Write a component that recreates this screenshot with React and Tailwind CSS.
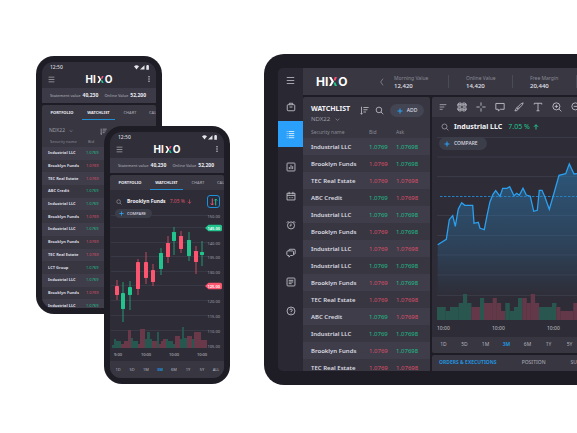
import React from "react";

const securities = [
  ["Industrial LLC", 1, 1],
  ["Brooklyn Funds", 0, 1],
  ["TEC Real Estate", 0, 0],
  ["ABC Credit", 1, 0],
  ["Industrial LLC", 1, 1],
  ["Brooklyn Funds", 0, 1],
  ["Industrial LLC", 0, 0],
  ["Industrial LLC", 1, 1],
  ["Brooklyn Funds", 0, 1],
  ["TEC Real Estate", 0, 0],
  ["ABC Credit", 1, 0],
  ["Industrial LLC", 1, 1],
  ["Brooklyn Funds", 0, 1],
  ["TEC Real Estate", 0, 0],
];

const phoneSecurities = [
  ["Industrial LLC", 1],
  ["Brooklyn Funds", 0],
  ["TEC Real Estate", 0],
  ["ABC Credit", 1],
  ["Industrial LLC", 1],
  ["Brooklyn Funds", 0],
  ["Industrial LLC", 1],
  ["Brooklyn Funds", 0],
  ["TEC Real Estate", 0],
  ["LCT Group", 1],
  ["Industrial LLC", 1],
  ["Brooklyn Funds", 0],
  ["Industrial LLC", 1],
];

// x, wick top, wick bottom, body top, body bottom, rising
const candles = [
  [7, 73, 93, 79, 88, 0],
  [13, 75, 115, 86, 102, 1],
  [20, 74, 103, 80, 88, 1],
  [28, 52, 88, 55, 82, 0],
  [36, 45, 77, 55, 71, 0],
  [43, 57, 79, 63, 75, 0],
  [51, 41, 68, 46, 62, 1],
  [58, 29, 56, 36, 50, 0],
  [64, 20, 48, 25, 34, 1],
  [71, 24, 46, 29, 42, 0],
  [79, 25, 54, 33, 49, 1],
  [86, 39, 67, 44, 55, 0],
  [92, 34, 59, 45, 48, 1],
];

// start, end, height, rising
const phoneVolume = [
  [2, 4, 3, 1], [4, 6, 9, 1], [6, 11, 7, 1], [11, 14, 4, 0], [14, 18, 7, 0],
  [18, 21, 18, 0], [21, 23, 10, 1], [23, 28, 7, 1], [28, 30, 4, 0], [30, 35, 19, 0],
  [35, 37, 9, 1], [37, 40, 16, 1], [40, 42, 9, 1], [42, 47, 7, 0], [47, 49, 16, 1],
  [49, 51, 4, 0], [51, 53, 7, 0], [53, 56, 9, 0], [56, 58, 9, 1], [58, 63, 7, 1],
  [63, 65, 4, 1], [65, 70, 12, 0], [70, 72, 9, 1], [72, 74, 21, 1], [74, 77, 10, 1],
  [77, 82, 12, 0], [82, 84, 9, 1], [84, 91, 16, 0], [91, 97, 8, 0],
];

const tabletVolume = [
  [5, 13.7, 13, 1], [13.7, 18, 9, 1], [18, 26.7, 13, 1], [26.7, 31, 17, 1],
  [31, 35, 26, 1], [35, 39.3, 17, 1], [39.3, 48, 13, 0], [48, 52, 22, 1],
  [52, 60.7, 17, 0], [60.7, 64.7, 22, 0], [64.7, 69, 17, 0], [69, 73.3, 9, 0],
  [73.3, 77.7, 17, 1], [77.7, 82, 9, 1], [82, 86, 13, 1], [86, 90.3, 22, 1],
  [90.3, 94.7, 22, 0], [94.7, 98.7, 17, 0], [98.7, 103, 26, 0], [103, 107, 17, 0],
  [107, 120, 13, 1], [120, 124.3, 17, 1], [124.3, 128.3, 13, 0], [128.3, 141.3, 9, 0],
  [141.3, 150, 17, 0], [150, 160, 13, 1], [160, 170, 9, 1], [170, 180, 17, 0],
];

const pricePath =
  "5.7,107.7 14.3,102.3 17.3,82.7 20.7,78.7 23.3,89.3 26.3,72 29.7,65.7 32.7,68.3 40.7,68.3 42,86.3 46.3,85.3 48,91.3 52.3,92.7 55,78.7 58,64.7 61,57.3 63.7,53.7 68,59.3 70.7,51.3 75,51.3 77.7,49.7 82,58.7 84.7,56.3 87.3,58.3 91,51.3 94.3,58 98.3,59.3 101.7,74.3 105.3,73.3 107.3,53.3 110,53.3 113,60.3 117.3,72.3 121.7,57.3 127,38.3 133.7,36.7 137.3,27 142,37 150,36 158,44 166,30 180,34";

const ICONS = {
  menu: <path d="M2 4h20M2 12h20M2 20h20" />,
  briefcase: <path d="M3 8.500a2 2 0 0 1 2-2h14a2 2 0 0 1 2 2V19a2 2 0 0 1-2 2H5a2 2 0 0 1-2-2zM8 6.500V3h8v3.500M8.500 12h7" />,
  list: <path d="M2 4h2M2 9.500h2M2 15h2M2 20.500h2M7 4h15M7 9.500h15M7 15h15M7 20.500h15" />,
  chart: <path d="M4 2.500h16a1.500 1.500 0 0 1 1.500 1.500v16a1.500 1.500 0 0 1-1.500 1.500H4A1.500 1.500 0 0 1 2.500 20V4A1.500 1.500 0 0 1 4 2.500zM8 17v-5M12 17V7M16 17v-7" />,
  calendar: <path d="M2.500 5.500h19V21.500h-19zM2.500 10.500h19M7.500 2v6M16.500 2v6M7 16h2M11 16h2M15 16h2" />,
  alarm: <path d="M12 4.500a8.500 8.500 0 1 1 0 17 8.500 8.500 0 0 1 0-17zM12 8.500V14H8.500M2 6.500l4-4M22 6.500l-4-4" />,
  chat: <path d="M7 7V5.500A2.500 2.500 0 0 1 9.500 3h10A2.500 2.500 0 0 1 22 5.500v7a2.500 2.500 0 0 1-2.500 2.500H18M4.500 7h11A2.500 2.500 0 0 1 18 9.500v6a2.500 2.500 0 0 1-2.500 2.500H11l-4 4v-4H4.500A2.500 2.500 0 0 1 2 15.500v-6A2.500 2.500 0 0 1 4.500 7z" />,
  news: <path d="M4.500 2.500h15a2 2 0 0 1 2 2v15a2 2 0 0 1-2 2h-15a2 2 0 0 1-2-2v-15a2 2 0 0 1 2-2zM6.500 8h11M6.500 12h11M6.500 16h7" />,
  help: <path d="M12 2.500a9.500 9.500 0 1 1 0 19 9.500 9.500 0 0 1 0-19zM9 10a3 3 0 1 1 3 3v1.500M12 16.500v1.500" />,
  sort: <path d="M4 2v20M1.500 19.500L4 22l2.500-2.500M9 4h14M9 10h11M9 16h7" />,
  search: <path d="M10.500 3a7.500 7.500 0 1 1 0 15 7.500 7.500 0 0 1 0-15zM16 16l6 6" />,
  plus: <path d="M12 2v20M2 12h20" />,
  left: <path d="M15 2l-7 10 7 10" />,
  down: <path d="M3 8l9 8 9-8" />,
  arrowUp: <path d="M12 22V3M4 11l8-8 8 8" />,
  arrowDown: <path d="M12 2v19M4 13l8 8 8-8" />,
  lines: <path d="M2 5h20M2 12h14M2 19h9" />,
  grid: <path d="M4.500 2.500H10V10H2V5zM14 2.500h5.500L22 5v5h-8zM2 14h8v7.500H4.500L2 19zM14 14h8v5l-2.500 2.500H14zM2 6.500h8M14 6.500h8M2 17.500h8M14 17.500h8" />,
  cross: <path d="M12 1v8M12 15v8M1 12h8M15 12h8" />,
  comment: <path d="M2 3.500h20v14h-9l-5 4v-4H2z" />,
  brush: <path d="M22 2c-4 1-9 5-12 9l3 3c4-3 8-8 9-12zM10 11l-3 3 3 3 3-3M7 14c-3 1-2 5-5 7 4 1 7-1 8-4" />,
  type: <path d="M3 6V3h18v3M12 3v18M8.500 21h7" />,
  zoomIn: <path d="M10.500 2a8.500 8.500 0 1 1 0 17 8.500 8.500 0 0 1 0-17zM17 17l5.500 5.500M10.500 6.500v8M6.500 10.500h8" />,
  zoomOut: <path d="M10.500 2a8.500 8.500 0 1 1 0 17 8.500 8.500 0 0 1 0-17zM17 17l5.500 5.500M6.500 10.500h8" />,
};

function Icon({ name, className = "size-[10px]", weight = 2 }) {
  return (
    <svg viewBox="0 0 24 24" fill="none" stroke="currentColor" strokeWidth={weight} className={"shrink-0 " + className} aria-hidden="true">
      {ICONS[name]}
    </svg>
  );
}

function Logo({ className, markClass }) {
  return (
    <div className={"flex items-center gap-px font-['Inter',sans-serif] font-bold leading-none text-white " + className}>
      <span>HI</span>
      <svg viewBox="0 0 16 18" className={markClass} aria-hidden="true">
        <path d="M0 0h4.500L10 9l-5.500 9H0l5-9z" fill="#fff" />
        <path d="M11.500 0H16l-3 7h-4z" fill="#ff4d6d" />
        <path d="M9 11h4l3 7h-4.500z" fill="#1fc98e" />
      </svg>
      <span>O</span>
    </div>
  );
}

const tone = (up) => (up ? "text-[#22bd8a]" : "text-[#dc5069]");

function Phone({ className = "", bodyClass, children }) {
  return (
    <section className={"h-[258px] w-[126px] rounded-[18px] bg-[#1e1d26] p-[6px] " + className}>
      <div className="flex h-full flex-col overflow-hidden rounded-[11px] bg-[#1e1d26]">
        <header className="bg-[#2f2e39] pb-[3px]">
          <div className="flex h-[11px] items-center justify-between pl-2 pr-[6px] text-[5px] font-medium text-[#d8d8de]">
            <span>12:50</span>
            <svg viewBox="0 0 16 5" className="h-[5px] w-[16px]" fill="#e4e4ea" aria-hidden="true">
              <path d="M0 1.200Q2.500-.8 5 1.200L2.500 4.600z" />
              <path d="M6 4.600L10.500.2v4.400z" />
              <path d="M12.300.6h.6V0h1.400v.6h.6v4.200h-2.600z" />
            </svg>
          </div>
          <div className="flex h-3 items-center justify-between px-1 text-[#c9c9d1]">
            <button aria-label="Menu" className="flex w-[9px] justify-end"><Icon name="menu" className="size-[7px]" /></button>
            <Logo className="text-[10px]" markClass="h-[7px] w-[7px]" />
            <button aria-label="More" className="flex w-[9px] justify-end">
              <svg viewBox="0 0 6 6" className="size-[6px]" fill="#dcdce2" aria-hidden="true">
                <circle cx="3" cy=".7" r=".7" /><circle cx="3" cy="3" r=".7" /><circle cx="3" cy="5.300" r=".7" />
              </svg>
            </button>
          </div>
        </header>
        <div className="flex h-[15px] items-center justify-between bg-[#3b3a46] pl-2 pr-[10px] text-[4px] text-[#b4b4bd]">
          <span className="flex items-center gap-[2px] whitespace-nowrap">Statement value <b className="text-[5px] font-bold text-[#ececf1]">40,230</b></span>
          <span className="flex items-center gap-[2px] whitespace-nowrap">Online Value <b className="text-[5px] font-bold text-[#ececf1]">52,200</b></span>
        </div>
        <nav className="mt-[2px] flex h-[15px] shrink-0 overflow-hidden rounded-t-[2px] bg-[#383742] text-[4px] font-bold">
          <button className="w-10 shrink-0 text-[#ececf1]">PORTFOLIO</button>
          <button className="w-[33px] shrink-0 border-b border-[#1f8fd6] pt-px text-[#ececf1]">WATCHLIST</button>
          <button className="w-[30px] shrink-0 font-medium text-[#a2a2ac]">CHART</button>
          <button className="shrink-0 pl-[4px] font-medium text-[#a2a2ac]">CALENDAR</button>
        </nav>
        <div className={"flex min-h-0 flex-1 flex-col " + bodyClass}>{children}</div>
      </div>
    </section>
  );
}

function WatchlistPhone() {
  return (
    <Phone className="ml-9 mt-14" bodyClass="bg-[#373641]">
      <div className="flex h-[17px] shrink-0 items-center pl-[7px] pr-[6px] pt-[5px] text-[5px] text-[#9c9ca6]">
        <span>NDX22</span>
        <Icon name="down" className="ml-[4px] size-1" weight={3} />
        <Icon name="sort" className="ml-[27px] size-[7px] text-[#c9c9d1]" />
      </div>
      <table className="h-[175px] w-full shrink-0 table-fixed text-left text-[4px] leading-none">
        <thead className="text-[#8a8a95]">
          <tr className="h-[10px]">
            <th className="w-[44px] pl-2 font-normal">Security name</th>
            <th className="pl-[2px] font-normal">Bid</th>
          </tr>
        </thead>
        <tbody>
          {phoneSecurities.map(([name, up], i) => (
            <tr key={i} className="odd:bg-[#3e3d49]">
              <td className="whitespace-nowrap pl-[6px] font-bold text-[#dcdce2]">{name}</td>
              <td className={tone(up)}>1.0769</td>
            </tr>
          ))}
        </tbody>
      </table>
    </Phone>
  );
}

function PriceTag({ y, fill, children }) {
  return (
    <g>
      <path d={`M95 ${y}l3.500-3.200h12a1.500 1.500 0 0 1 1.500 1.500v3.400a1.500 1.500 0 0 1-1.500 1.500h-12z`} fill={fill} />
      <text x="110" y={y + 1.5} textAnchor="end" fontSize="4" fontWeight="600" fill="#fff">{children}</text>
    </g>
  );
}

function ChartPhone() {
  const labels = [["150.00", 9], ["140.00", 36], ["135.00", 50], ["130.00", 65], ["120.00", 94], ["115.00", 109], ["110.00", 124], ["105.00", 139]];
  return (
    <Phone className="absolute left-[104px] top-[126px]" bodyClass="bg-[#2e2d37]">
      <div className="mt-[5px] flex h-[13px] items-center pl-[6px] pr-1 text-[5px]">
        <Icon name="search" className="size-[6px] text-[#b4b4bd]" />
        <span className="ml-[5px] whitespace-nowrap font-bold text-[#f2f2f6]">Brooklyn Funds</span>
        <span className="ml-1 whitespace-nowrap text-[#dc5069]">7.05 %</span>
        <Icon name="arrowDown" className="ml-[2px] size-[5px] text-[#e0506c]" weight={3} />
        <button aria-label="Buy or sell" className="ml-auto flex size-[13px] items-center justify-center rounded-[3px] border border-[#1f8fd6] bg-[#262c3c]">
          <svg viewBox="0 0 8 8" className="size-2" fill="none" strokeWidth="1" aria-hidden="true">
            <path d="M2.300.5v6.500M.8 5.500L2.300 7l1.500-1.500" stroke="#f5506e" />
            <path d="M5.700 7.500V1M4.200 2.500L5.700 1l1.500 1.500" stroke="#20c48c" />
          </svg>
        </button>
      </div>
      <div className="relative">
        <svg viewBox="0 1 114 153" className="block h-[153px] w-full" aria-hidden="true">
          {[9, 21, 36, 50, 65, 79, 94, 109, 124].map((y) => (
            <path key={y} d={`M1 ${y - 0.5}h97`} stroke="#393845" strokeWidth="1" />
          ))}
          {phoneVolume.map(([a, b, h, up], i) => (
            <rect key={i} x={a} y={141 - h} width={b - a} height={h} fill={up ? "#27584f" : "#69394a"} />
          ))}
          {candles.map(([x, wt, wb, bt, bb, up], i) => (
            <g key={i} fill={up ? "#20c48c" : "#fb5570"}>
              <rect x={x - 0.5} y={wt} width="1" height={wb - wt} opacity=".7" />
              <rect x={x - 2} y={bt} width="4" height={bb - bt} rx=".4" />
            </g>
          ))}
          <g fontSize="4" fill="#a2a2ac">
            {labels.map(([t, y]) => (
              <text key={t} x="110" y={y + 1.5} textAnchor="end">{t}</text>
            ))}
            {[["9:00", 8], ["10:00", 36], ["10:00", 64], ["10:00", 92]].map(([t, x]) => (
              <text key={x} x={x} y="149" textAnchor="middle" fill="#c4c4cc">{t}</text>
            ))}
          </g>
          <PriceTag y={21} fill="#20c48c">145.00</PriceTag>
          <PriceTag y={79} fill="#fb5570">125.00</PriceTag>
        </svg>
        <button className="absolute left-[5px] top-px flex h-[9px] items-center gap-[3px] rounded-full bg-[#3b3d49] pl-[4px] pr-[6px] text-[4px] font-medium text-[#dcdce2]">
          <Icon name="plus" className="size-[5px] text-[#2aa3f5]" weight={4} />COMPARE
        </button>
      </div>
      <div className="grid flex-1 grid-cols-8 items-center bg-[#373641] px-px text-[4px] text-[#b4b4bd]">
        {["1D", "5D", "1M", "3M", "6M", "1Y", "5Y", "ALL"].map((r) => (
          <button key={r} className={r === "3M" ? "font-bold text-[#2391dc]" : ""}>{r}</button>
        ))}
      </div>
    </Phone>
  );
}

function Sidebar() {
  return (
    <nav className="flex w-[25px] shrink-0 flex-col items-center bg-[#2a2933] text-[#c9c9d1]">
      <button aria-label="Menu" className="flex h-[25px] items-center"><Icon name="menu" className="size-[9px]" /></button>
      <button aria-label="Portfolio" className="flex h-7 items-center pb-px"><Icon name="briefcase" /></button>
      <button aria-label="Watchlist" className="flex h-[26px] w-full items-center justify-center bg-[#2aa0fb] text-white"><Icon name="list" className="size-[9px]" /></button>
      <div className="mt-[15px] flex h-[154px] flex-col justify-between">
        {["chart", "calendar", "alarm", "chat", "news", "help"].map((n) => (
          <button key={n} aria-label={n} className="flex"><Icon name={n} /></button>
        ))}
      </div>
    </nav>
  );
}

function Watchlist() {
  return (
    <section className="w-[127px] shrink-0 overflow-hidden rounded-t-[2px] bg-[#373641]">
      <div className="flex h-[29px] pl-2 pt-[7px]">
        <div className="w-[49px]">
          <h2 className="text-[7px] font-bold leading-[10px] text-[#f2f2f6]">WATCHLIST</h2>
          <button className="flex items-center gap-[5px] text-[6px] leading-[10px] text-[#9c9ca6]">
            NDX22 <Icon name="down" className="size-[5px]" weight={3} />
          </button>
        </div>
        <div className="flex h-[13px] items-center text-[#d0d0d7]">
          <button aria-label="Sort" className="flex"><Icon name="sort" className="size-[9px]" /></button>
          <button aria-label="Search" className="ml-[6px] flex"><Icon name="search" className="size-[9px]" /></button>
          <button className="ml-[6px] flex h-[13px] w-[34px] items-center justify-center gap-[4px] rounded-full bg-[#434553] text-[5px] font-medium text-[#dcdce2]">
            <Icon name="plus" className="size-[6px] text-[#2aa3f5]" weight={4} />ADD
          </button>
        </div>
      </div>
      <table className="w-full table-fixed text-left text-[6px] leading-none">
        <thead className="text-[5px] text-[#8a8a95]">
          <tr className="h-3">
            <th className="w-[66px] whitespace-nowrap pl-2 font-normal">Security name</th>
            <th className="w-[27px] font-normal">Bid</th>
            <th className="font-normal">Ask</th>
          </tr>
        </thead>
        <tbody>
          {securities.map(([name, bid, ask], i) => (
            <tr key={i} className="h-[17px] odd:bg-[#3e3d49]">
              <td className="whitespace-nowrap pl-2 font-semibold text-[#dcdce2]">{name}</td>
              <td className={tone(bid)}>1.0769</td>
              <td className={tone(ask)}>1.07698</td>
            </tr>
          ))}
        </tbody>
      </table>
    </section>
  );
}

function ChartPanel() {
  return (
    <section className="flex min-w-0 flex-1 flex-col">
      <div className="flex flex-1 flex-col overflow-hidden rounded-l-[2px] bg-[#2e2d37]">
        <div className="flex h-5 items-center gap-[9px] bg-[#383742] pl-[6px] text-[#c9c9d1]">
          {["lines", "grid", "cross", "comment", "brush", "type", "zoomIn", "zoomOut"].map((n) => (
            <button key={n} aria-label={n} className="flex">
              <Icon name={n} className={n === "lines" ? "size-[10px] p-px" : "size-[10px]"} />
            </button>
          ))}
        </div>
        <div className="flex h-5 items-center pl-[9px] text-[7px]">
          <Icon name="search" className="size-2 text-[#b4b4bd]" />
          <span className="ml-[5px] whitespace-nowrap font-bold text-[#f2f2f6]">Industrial LLC</span>
          <span className="ml-[6px] whitespace-nowrap text-[#20c48c]">7.05 %</span>
          <Icon name="arrowUp" className="ml-[3px] size-[6px] text-[#20c48c]" weight={4} />
        </div>
        <div className="relative h-[200px]">
          <svg viewBox="0 0 180 200" className="block h-[200px] w-[180px]" aria-hidden="true">
            <defs>
              <linearGradient id="area" x1="0" y1="0" x2="0" y2="1">
                <stop offset="0" stopColor="#2a8fd6" stopOpacity=".42" />
                <stop offset=".6" stopColor="#2a8fd6" stopOpacity=".22" />
                <stop offset="1" stopColor="#2a8fd6" stopOpacity="0" />
              </linearGradient>
            </defs>
            {[0.5, 20, 39.5, 78.5, 98.5, 118, 138, 158.5].map((y) => (
              <path key={y} d={`M5 ${y}h175`} stroke="#3a3946" strokeWidth="1" />
            ))}
            <polygon points={`5.700,160 ${pricePath} 180,160`} fill="url(#area)" />
            <path d="M8 59.500h172" stroke="#2480c0" strokeWidth="1" strokeDasharray="2.500 1.500" />
            <polyline points={pricePath} fill="none" stroke="#2aa0f0" strokeWidth="1.300" />
            {tabletVolume.map(([a, b, h, up], i) => (
              <rect key={i} x={a} y={183 - h} width={b - a + 0.1} height={h} fill={up ? "#29574f" : "#633848"} />
            ))}
            <g fontSize="5" fill="#c4c4cc">
              <text x="5" y="193">10:00</text>
              <text x="60" y="193">10:00</text>
              <text x="115" y="193">10:00</text>
            </g>
          </svg>
          <button className="absolute left-[7px] top-0 flex h-[13px] items-center gap-1 rounded-full bg-[#3b3d49] pl-[5px] pr-[9px] text-[5px] font-medium text-[#dcdce2]">
            <Icon name="plus" className="size-[6px] text-[#2aa3f5]" weight={4} />COMPARE
          </button>
        </div>
        <div className="flex flex-1 items-center bg-[#373641] pl-px text-[5px] text-[#b4b4bd]">
          {["1D", "5D", "1M", "3M", "6M", "1Y", "5Y"].map((r) => (
            <button key={r} className={r === "3M" ? "w-[21px] shrink-0 font-bold text-[#2391dc]" : "w-[21px] shrink-0"}>{r}</button>
          ))}
        </div>
      </div>
      <div className="mt-[2px] flex h-4 items-center gap-[25px] overflow-hidden rounded-tl-[2px] bg-[#373641] pl-[7px] text-[5px] text-[#a2a2ac]">
        <button className="shrink-0 whitespace-nowrap font-bold text-[#2391dc]">ORDERS &amp; EXECUTIONS</button>
        <button className="shrink-0 font-medium">POSITION</button>
        <button className="shrink-0 font-medium">SUMMARY</button>
      </div>
    </section>
  );
}

function HeaderStat({ label, value, className }) {
  return (
    <div className={"mr-[17px] flex h-[13px] shrink-0 flex-col justify-center whitespace-nowrap border-r border-[#4b4a57] text-[6px] leading-[8px] " + className}>
      <span className="text-[5px] text-[#8a8a95]">{label}</span>
      <span className="font-medium text-[#e4e4ea]">{value}</span>
    </div>
  );
}

function Tablet() {
  return (
    <section className="ml-[34px] mt-[54px] h-[331px] min-w-0 flex-1 overflow-hidden rounded-l-[20px] bg-[#1e1d26] py-[14px] pl-[14px]">
      <div className="flex h-full overflow-hidden rounded-l-[5px]">
        <Sidebar />
        <div className="flex min-w-0 flex-1 flex-col">
          <header className="flex h-[27px] shrink-0 items-center overflow-hidden bg-[#383742] pl-[13px]">
            <Logo className="w-[62px] shrink-0 text-[12px]" markClass="h-[9px] w-2" />
            <button aria-label="Previous" className="flex w-4 shrink-0 text-[#9c9ca6]"><Icon name="left" className="size-2" /></button>
            <HeaderStat label="Morning Value" value="12,420" className="w-[55px]" />
            <HeaderStat label="Online Value" value="14,420" className="w-[47px]" />
            <HeaderStat label="Free Margin" value="20,440" className="w-[47px]" />
          </header>
          <div className="mt-[2px] flex min-h-0 flex-1 gap-[2px]">
            <Watchlist />
            <ChartPanel />
          </div>
        </div>
      </div>
    </section>
  );
}

export default function App() {
  return (
    <main className="relative flex min-h-screen items-start overflow-hidden bg-white font-['Noto_Sans','Open_Sans',sans-serif]">
      <div className="w-[230px] shrink-0">
        <WatchlistPhone />
        <ChartPhone />
      </div>
      <Tablet />
    </main>
  );
}
